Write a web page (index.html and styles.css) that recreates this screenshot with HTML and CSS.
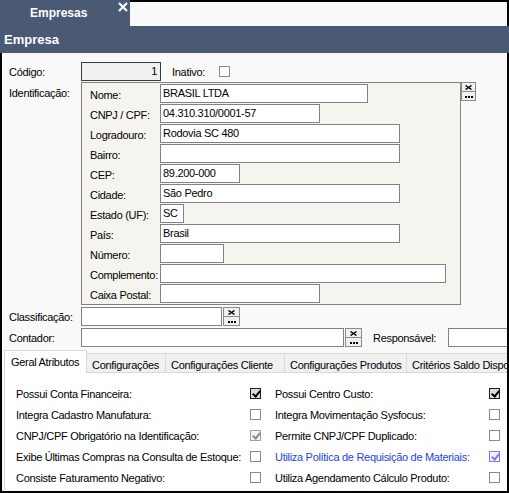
FILE: index.html
```html
<!DOCTYPE html>
<html lang="pt-BR">
<head>
    <meta charset="UTF-8">
    <title>Empresas</title>
    <link rel="stylesheet" href="styles.css">
</head>
<body>
<div class="window">

    <!-- Document tabs -->
    <div class="doc-tabs">
        <div class="doc-tab">
            <span class="doc-tab-title">Empresas</span>
            <svg class="doc-tab-close" width="10" height="10" viewBox="0 0 10 10">
                <path d="M1 1 L9 9 M9 1 L1 9" stroke="#fff" stroke-width="2.2" fill="none"/>
            </svg>
        </div>
        <div class="doc-tabs-rest"></div>
    </div>

    <div class="title-bar">Empresa</div>

    <div class="content">

        <div class="row row-codigo">
            <div class="lbl">Código:</div>
            <div class="field field-ro">1</div>
            <div class="lbl-inline lbl-inativo">Inativo:</div>
            <span class="chk"></span>
        </div>

        <!-- Identificação group -->
        <div class="row row-ident">
            <div class="lbl lbl-top">Identificação:</div>
            <div class="group">
                <div class="g-lbl">Nome:</div>
                <div class="field" style="width: 208px">BRASIL LTDA</div>
                <div class="g-lbl">CNPJ / CPF:</div>
                <div class="field" style="width: 160px">04.310.310/0001-57</div>
                <div class="g-lbl">Logradouro:</div>
                <div class="field" style="width: 240px">Rodovia SC 480</div>
                <div class="g-lbl">Bairro:</div>
                <div class="field" style="width: 240px"></div>
                <div class="g-lbl">CEP:</div>
                <div class="field" style="width: 80px">89.200-000</div>
                <div class="g-lbl">Cidade:</div>
                <div class="field" style="width: 240px">São Pedro</div>
                <div class="g-lbl">Estado (UF):</div>
                <div class="field" style="width: 24px">SC</div>
                <div class="g-lbl">País:</div>
                <div class="field" style="width: 240px">Brasil</div>
                <div class="g-lbl">Número:</div>
                <div class="field" style="width: 64px"></div>
                <div class="g-lbl">Complemento:</div>
                <div class="field" style="width: 286px"></div>
                <div class="g-lbl">Caixa Postal:</div>
                <div class="field" style="width: 160px"></div>
            </div>
            <div class="lookup lookup-group">
                <div class="lookup-btn">
                    <svg width="7" height="5" viewBox="0 0 7 5"><path d="M0.5 0.5 L6.5 4.5 M6.5 0.5 L0.5 4.5" stroke="#000" stroke-width="1.4" fill="none"/></svg>
                </div>
                <div class="lookup-btn"><span class="dots"><i></i><i></i><i></i></span></div>
            </div>
        </div>

        <div class="row row-lookup">
            <div class="lbl">Classificação:</div>
            <div class="field" style="width: 141px"></div>
            <div class="lookup">
                <div class="lookup-btn">
                    <svg width="7" height="5" viewBox="0 0 7 5"><path d="M0.5 0.5 L6.5 4.5 M6.5 0.5 L0.5 4.5" stroke="#000" stroke-width="1.4" fill="none"/></svg>
                </div>
                <div class="lookup-btn"><span class="dots"><i></i><i></i><i></i></span></div>
            </div>
        </div>

        <div class="row row-lookup">
            <div class="lbl">Contador:</div>
            <div class="field" style="width: 263px"></div>
            <div class="lookup">
                <div class="lookup-btn">
                    <svg width="7" height="5" viewBox="0 0 7 5"><path d="M0.5 0.5 L6.5 4.5 M6.5 0.5 L0.5 4.5" stroke="#000" stroke-width="1.4" fill="none"/></svg>
                </div>
                <div class="lookup-btn"><span class="dots"><i></i><i></i><i></i></span></div>
            </div>
            <div class="lbl-inline lbl-resp">Responsável:</div>
            <div class="field field-resp"></div>
        </div>

        <!-- Page tabs -->
        <div class="page-tabs">
            <div class="page-tab active">Geral Atributos</div>
            <div class="page-tab" style="width: 79px">Configurações</div>
            <div class="page-tab" style="width: 119px">Configurações Cliente</div>
            <div class="page-tab" style="width: 122px">Configurações Produtos</div>
            <div class="page-tab page-tab-last">Critérios Saldo Dispo</div>
        </div>

        <div class="tab-panel">
            <div class="opt"><span>Possui Conta Financeira:</span><span class="chk checked"></span></div>
            <div class="opt"><span>Possui Centro Custo:</span><span class="chk checked"></span></div>

            <div class="opt"><span>Integra Cadastro Manufatura:</span><span class="chk"></span></div>
            <div class="opt"><span>Integra Movimentação Sysfocus:</span><span class="chk"></span></div>

            <div class="opt"><span>CNPJ/CPF Obrigatório na Identificação:</span><span class="chk checked disabled"></span></div>
            <div class="opt"><span>Permite CNPJ/CPF Duplicado:</span><span class="chk"></span></div>

            <div class="opt"><span>Exibe Últimas Compras na Consulta de Estoque:</span><span class="chk"></span></div>
            <div class="opt opt-focus"><span>Utiliza Política de Requisição de Materiais:</span><span class="chk checked focus"></span></div>

            <div class="opt"><span>Consiste Faturamento Negativo:</span><span class="chk"></span></div>
            <div class="opt"><span>Utiliza Agendamento Cálculo Produto:</span><span class="chk"></span></div>
        </div>

    </div>
</div>
</body>
</html>
```

FILE: styles.css
```css
* {
    box-sizing: border-box;
}

body {
    margin: 0;
    background-color: #f9f9f9;
    font-family: "Liberation Sans", Arial, sans-serif;
    font-size: 11px;
    letter-spacing: -0.3px;
    color: #000;
}

.window {
    width: 509px;
    height: 493px;
    display: flex;
    flex-direction: column;
    overflow: hidden;
}

/* Document tabs */
.doc-tabs {
    display: flex;
    height: 26px;
    flex: none;
}

.doc-tab {
    width: 130px;
    background-color: #4a5a74;
    position: relative;
}

.doc-tab-title {
    display: block;
    color: #fff;
    font-weight: bold;
    font-size: 12px;
    letter-spacing: 0;
    padding: 6px 0 0 30px;
}

.doc-tab-close {
    position: absolute;
    top: 2px;
    left: 118px;
}

.doc-tabs-rest {
    flex: 1;
    border-top: 2px solid #000;
    border-right: 2px solid #000;
}

.title-bar {
    height: 27px;
    flex: none;
    background-color: #4a5a74;
    color: #fff;
    font-weight: bold;
    font-size: 13px;
    letter-spacing: 0;
    padding: 6px 0 0 4px;
}

.content {
    flex: 1;
    border: 2px solid #000;
    border-top: none;
    padding: 9px 0 0 7px;
    overflow: hidden;
}

.row {
    display: flex;
    align-items: center;
}

.lbl {
    width: 72px;
    flex: none;
    white-space: nowrap;
}

.lbl-top {
    align-self: flex-start;
    padding-top: 5px;
}

.lbl-inline {
    flex: none;
    white-space: nowrap;
    margin-left: 11px;
}

.lbl-inativo {
    width: 47px;
}

.field {
    height: 19px;
    background-color: #fff;
    border: 1px solid #828282;
    padding: 2px 0 0 2px;
    white-space: nowrap;
    flex: none;
}

.field-ro {
    width: 80px;
    background-color: #f0f0f0;
    border-color: #3c3c3c;
    text-align: right;
    padding-right: 3px;
}

.row-ident {
    margin-top: 1px;
    align-items: flex-start;
}

.row-lookup {
    margin-top: 2px;
}

/* Identificação group box */
.group {
    width: 380px;
    height: 223px;
    background-color: #f5f4ef;
    border: 1px solid #828282;
    padding: 1px 0 0 8px;
    display: grid;
    grid-template-columns: 70px auto;
    grid-auto-rows: 20px;
    justify-items: start;
}

.g-lbl {
    padding-top: 5px;
    white-space: nowrap;
}

/* Lookup buttons (clear / search) */
.lookup {
    display: flex;
    flex-direction: column;
    width: 17px;
    flex: none;
    margin-left: 1px;
}

.lookup-group {
    width: 15px;
    margin-left: 0;
}

.lookup-btn {
    height: 10px;
    background-color: #f0f0f0;
    border: 1px solid #8a8a8a;
    display: flex;
    align-items: center;
    justify-content: center;
}

.lookup-btn + .lookup-btn {
    height: 9px;
    border-top: none;
}

.dots {
    display: flex;
    gap: 1px;
    margin-top: 2px;
}

.dots i {
    width: 2px;
    height: 2px;
    background-color: #000;
}

.lbl-resp {
    width: 75px;
}

.field-resp {
    width: 80px;
}

/* Checkboxes */
.chk {
    width: 11px;
    height: 11px;
    flex: none;
    border: 1px solid #8a8a8a;
    background-color: #fff;
    display: inline-block;
    position: relative;
}

.chk.checked {
    border-color: #1e1e1e;
    background-color: #dcdcdc;
}

.chk.checked::after {
    content: "";
    position: absolute;
    left: 2px;
    top: 0;
    width: 3px;
    height: 6px;
    border: solid #000;
    border-width: 0 2px 2px 0;
    transform: translate(1px, 0) rotate(40deg);
}

.chk.disabled {
    border-color: #a0a0a0;
    background-color: #f4f4f4;
}

.chk.disabled::after {
    border-color: #8a8a8a;
}

.chk.focus {
    border-color: #7b7bf2;
    background-color: #f4f4ff;
}

.chk.focus::after {
    border-color: #7b7bf2;
}

/* Page tabs */
.page-tabs {
    display: flex;
    align-items: flex-end;
    margin: 3px 0 0 -5px;
    height: 23px;
    flex: none;
}

.page-tab {
    height: 20px;
    background-color: #f0f0f0;
    border: 1px solid #d9d9d9;
    border-left: none;
    padding: 5px 0 0 5px;
    white-space: nowrap;
    overflow: hidden;
    flex: none;
}

.page-tab.active {
    width: 83px;
    height: 23px;
    background-color: #fff;
    border-left: 1px solid #d9d9d9;
    border-bottom: none;
    padding: 5px 0 0 6px;
}

.page-tab-last {
    flex: 1;
    border-right: none;
}

.tab-panel {
    margin-left: -5px;
    height: 117px;
    background-color: #fff;
    border-left: 1px solid #d9d9d9;
    padding: 10px 0 0 11px;
    display: grid;
    grid-template-columns: 245px 225px;
    column-gap: 14px;
    grid-auto-rows: 21px;
}

.opt {
    display: flex;
    align-items: center;
    justify-content: space-between;
    white-space: nowrap;
}

.opt-focus {
    color: #1f3fe0;
}
```
